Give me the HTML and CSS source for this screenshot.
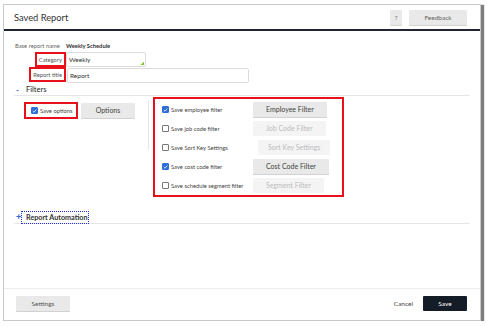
FILE: index.html
```html
<!DOCTYPE html>
<html>
<head>
<meta charset="utf-8">
<link rel="stylesheet" href="styles.css">
</head>
<body>
<div class="modal">
  <header class="hdr">
    <span class="title">Saved Report</span>
    <div class="hdr-actions">
      <button class="btn btn-q">?</button>
      <button class="btn btn-fb">Feedback</button>
    </div>
  </header>
  <main class="content">
    <div class="base-row"><span class="base-lbl">Base report name</span><span class="base-val">Weekly Schedule</span></div>
    <div class="field-row">
      <div class="lbl-col"><span class="flbl hl">Category</span></div>
      <div class="inp inp-cat">Weekly<span class="grip"></span></div>
    </div>
    <div class="field-row">
      <div class="lbl-col"><span class="flbl hl">Report title</span></div>
      <div class="inp inp-title">Report</div>
    </div>
    <div class="sec-head"><span class="toggle">-</span><span class="sec-title">Filters</span></div>
    <div class="filters">
      <div class="left">
        <div class="save-opt hl"><span class="cb on"><svg viewBox="0 0 8 8" width="6" height="6"><path d="M1.3 4.2 L3.2 6 L6.8 1.8" fill="none" stroke="#fff" stroke-width="1.3"/></svg></span><span class="cb-txt">Save options</span></div>
        <button class="btn btn-opt">Options</button>
      </div>
      <div class="vline"></div>
      <div class="filter-box hl">
        <div class="frow">
          <span class="cb on"><svg viewBox="0 0 8 8" width="6" height="6"><path d="M1.3 4.2 L3.2 6 L6.8 1.8" fill="none" stroke="#fff" stroke-width="1.3"/></svg></span><span class="cb-txt">Save employee filter</span>
          <button class="btn fbtn">Employee Filter</button>
        </div>
        <div class="frow">
          <span class="cb"></span><span class="cb-txt">Save job code filter</span>
          <button class="btn fbtn dis">Job Code Filter</button>
        </div>
        <div class="frow">
          <span class="cb"></span><span class="cb-txt">Save Sort Key Settings</span>
          <button class="btn fbtn dis shift">Sort Key Settings</button>
        </div>
        <div class="frow">
          <span class="cb on"><svg viewBox="0 0 8 8" width="6" height="6"><path d="M1.3 4.2 L3.2 6 L6.8 1.8" fill="none" stroke="#fff" stroke-width="1.3"/></svg></span><span class="cb-txt">Save cost code filter</span>
          <button class="btn fbtn">Cost Code Filter</button>
        </div>
        <div class="frow">
          <span class="cb"></span><span class="cb-txt">Save schedule segment filter</span>
          <button class="btn fbtn dis">Segment Filter</button>
        </div>
      </div>
    </div>
    <div class="sec-head auto"><span class="toggle plus">+</span><span class="sec-title focus">Report Automation</span></div>
  </main>
  <footer class="ftr">
    <button class="btn btn-set">Settings</button>
    <div class="ftr-right">
      <span class="cancel">Cancel</span>
      <button class="btn btn-save">Save</button>
    </div>
  </footer>
</div>
</body>
</html>
```

FILE: styles.css
```css
* { box-sizing: border-box; }
html, body { margin: 0; padding: 0; background: #fff; }
body { font-family: Lato, "Open Sans", sans-serif; color: #333; }

.modal {
  margin: 4px 0 0 3px;
  width: 478px;
  height: 317px;
  border: 1px solid #c9c9c9;
  box-shadow: 2px 2px 1px 1px #7d7d7d;
  background: #fff;
  display: flex;
  flex-direction: column;
}

.btn {
  font-family: Lato, "Open Sans", sans-serif;
  border: none;
  background: #e8e9e8;
  color: #444;
  border-radius: 1px;
  height: 15px;
  padding: 0;
  font-size: 7px;
  line-height: 15px;
  box-shadow: 0 1px 0 #d2d2d2;
  cursor: default;
}

.hdr {
  height: 26px;
  flex: none;
  border-bottom: 2px solid #1d2632;
  display: flex;
  align-items: center;
  justify-content: space-between;
  padding: 0 13px 0 10px;
}
.title { font-size: 9.3px; color: #333; }
.hdr-actions { display: flex; gap: 7px; }
.btn-q { width: 12px; font-size: 6px; color: #666; }
.btn-fb { width: 58px; font-size: 6.5px; color: #666; }

.content {
  flex: 1;
  padding: 10px 10px 0 10px;
}
.base-row { height: 8px; display: flex; align-items: center; font-size: 5.8px; padding-left: 1px; margin-bottom: 3px; }
.base-lbl { color: #666; width: 51px; }
.base-val { font-weight: bold; color: #333; }

.field-row { height: 15px; display: flex; align-items: center; }
.lbl-col { width: 52px; display: flex; justify-content: flex-end; }
.hl { border: 2px solid #e8101a; }
.flbl { font-size: 5.8px; color: #555; height: 15px; line-height: 11px; padding: 0 2px; }
.inp {
  height: 15px;
  border: 1px solid #dcdcdc;
  border-radius: 2px;
  font-size: 6.5px;
  line-height: 13px;
  padding: 0 2px;
  color: #333;
  position: relative;
}
.inp-cat { width: 80px; margin-top: -1px; }
.inp-title { width: 182px; margin-left: 1px; margin-top: 1px; }
.grip {
  position: absolute; right: 1px; bottom: 1px;
  width: 3px; height: 3px;
  background: linear-gradient(135deg, transparent 50%, #8cc43c 50%);
}

.sec-head {
  margin-top: 2px;
  height: 12px;
  border-bottom: 1px solid #e6e6e6;
  display: flex;
  align-items: center;
}
.toggle { color: #2b63c4; font-weight: bold; font-size: 8px; width: 12px; padding-left: 2px; line-height: 8px; }
.sec-title { font-size: 7.5px; color: #333; font-weight: 500; }

.filters { display: flex; align-items: flex-start; margin-top: 1px; }
.left { display: flex; align-items: flex-start; gap: 3px; margin-left: 10px; margin-top: 5px; }
.save-opt { width: 54px; height: 17px; display: flex; align-items: center; padding-left: 5px; }
.btn-opt { width: 54px; margin-top: 1px; font-size: 7px; }
.vline { width: 1px; height: 50px; background: #e6e6e6; margin: 3px 0 0 13px; }
.filter-box { width: 191px; height: 100px; margin-left: 4px; padding: 1px 0 0 7px; }
.frow { height: 19px; display: flex; align-items: center; }
.cb {
  width: 7px; height: 7px; flex: none;
  border: 1px solid #777;
  border-radius: 1px;
  background: #fff;
  display: flex; align-items: center; justify-content: center;
}
.cb.on { background: #2f6ed8; border-color: #2f6ed8; }
.cb-txt { font-size: 5.8px; color: #444; margin-left: 2px; width: 82px; flex: none; white-space: nowrap; }
.save-opt .cb-txt { width: auto; }
.fbtn { padding: 0 13px; font-size: 7px; }
.fbtn.dis { background: #f4f4f4; color: #bbb; box-shadow: none; }
.fbtn.shift { margin-left: 5px; padding: 0 10px; }

.sec-head.auto { margin-top: 14px; height: 13px; }
.plus { font-size: 9px; padding-left: 2px; width: 7px; }
.focus { border: 1px dotted #2430d8; padding: 0 1px 0 4px; font-weight: bold; font-size: 7.2px; line-height: 11px; }

.ftr {
  height: 32px;
  flex: none;
  border-top: 1px solid #ececec;
  display: flex;
  align-items: flex-start;
  justify-content: space-between;
  padding: 7px 13px 0 12px;
}
.btn-set { width: 54px; font-size: 6.5px; color: #555; }
.ftr-right { display: flex; align-items: center; gap: 10px; }
.cancel { font-size: 6.5px; color: #444; }
.btn-save { width: 44px; background: #141c27; color: #fff; box-shadow: none; font-size: 6.5px; }
```
